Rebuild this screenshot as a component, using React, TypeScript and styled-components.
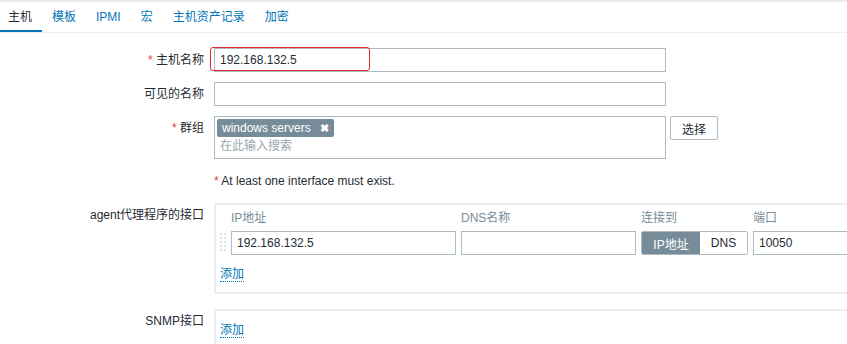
import styled, {createGlobalStyle, css} from 'styled-components';

const GlobalStyle = createGlobalStyle`
  html {
    overflow: hidden;
  }
  body {
    margin: 0;
    background: #fff;
    color: #1f2c33;
    font-family: "Liberation Sans", Arial, "Noto Sans CJK SC", sans-serif;
    font-size: 12px;
  }
`;

const tabs = ['主机', '模板', 'IPMI', '宏', '主机资产记录', '加密'];

export default function App() {
    return (
        <>
            <GlobalStyle/>
            <Page>
                <TabBar>
                    {tabs.map((tab, i) => (
                        <Tab key={tab} $active={i === 0}>{tab}</Tab>
                    ))}
                </TabBar>

                <Form>
                    <Label><Required>*</Required> 主机名称</Label>
                    <Field>
                        <Marked>
                            <TextInput $width={452} defaultValue="192.168.132.5"/>
                            <Highlight/>
                        </Marked>
                    </Field>

                    <Label>可见的名称</Label>
                    <Field>
                        <TextInput $width={452}/>
                    </Field>

                    <Label><Required>*</Required> 群组</Label>
                    <Field>
                        <MultiSelect>
                            <Tag>windows servers<TagRemove>✖</TagRemove></Tag>
                            <Placeholder>在此输入搜索</Placeholder>
                        </MultiSelect>
                        <Button>选择</Button>
                    </Field>

                    <Label/>
                    <Field>
                        <Notice><Required>*</Required> At least one interface must exist.</Notice>
                    </Field>

                    <Label>agent代理程序的接口</Label>
                    <Field>
                        <InterfaceBox>
                            <InterfaceGrid>
                                <span/>
                                <HeaderCell>IP地址</HeaderCell>
                                <HeaderCell>DNS名称</HeaderCell>
                                <HeaderCell>连接到</HeaderCell>
                                <HeaderCell>端口</HeaderCell>

                                <DragHandle width="6" height="20" viewBox="0 0 6 20">
                                    {[0, 4, 8, 12, 16].map(y => (
                                        <g key={y}>
                                            <rect x="0" y={y} width="2" height="2"/>
                                            <rect x="4" y={y} width="2" height="2"/>
                                        </g>
                                    ))}
                                </DragHandle>
                                <TextInput $width={225} defaultValue="192.168.132.5"/>
                                <TextInput $width={175}/>
                                <Toggle>
                                    <ToggleOption $selected>IP地址</ToggleOption>
                                    <ToggleOption>DNS</ToggleOption>
                                </Toggle>
                                <TextInput $width={100} defaultValue="10050"/>
                            </InterfaceGrid>
                            <AddLink>添加</AddLink>
                        </InterfaceBox>
                    </Field>

                    <Label $spaced>SNMP接口</Label>
                    <Field $spaced>
                        <InterfaceBox>
                            <AddLink>添加</AddLink>
                        </InterfaceBox>
                    </Field>
                </Form>
            </Page>
        </>
    );
}

const Page = styled.div`
  border-top: 2px solid #e8ebed;
  overflow: hidden;
`;

const TabBar = styled.div`
  display: flex;
  gap: 2px;
  height: 30px;
  border-bottom: 1px solid #ebeef0;
`;

const Tab = styled.div<{ $active?: boolean }>`
  padding: 0 10px 0 8px;
  line-height: 30px;
  color: #0275b8;
  cursor: pointer;

  ${({$active}) => $active && css`
    color: #1f2c33;
    box-shadow: inset 0 -2px 0 #0275b8;
  `}
`;

const Form = styled.div`
  display: grid;
  grid-template-columns: 204px minmax(0, 1fr);
  column-gap: 10px;
  row-gap: 10px;
  padding-top: 15px;
`;

const Label = styled.div<{ $spaced?: boolean }>`
  text-align: right;
  line-height: 24px;
  white-space: nowrap;
  margin-top: ${({$spaced}) => ($spaced ? '5px' : '0')};
`;

const Field = styled.div<{ $spaced?: boolean }>`
  display: flex;
  align-items: flex-start;
  gap: 4px;
  min-width: 0;
  margin-top: ${({$spaced}) => ($spaced ? '5px' : '0')};
`;

const Required = styled.span`
  color: #e33734;
`;

const Marked = styled.div`
  position: relative;
`;

const Highlight = styled.div`
  position: absolute;
  left: -4px;
  top: -1px;
  width: 158px;
  height: 22px;
  border: 1.5px solid #e3282b;
  border-radius: 3px;
  pointer-events: none;
`;

const TextInput = styled.input<{ $width: number }>`
  box-sizing: border-box;
  width: ${({$width}) => $width}px;
  height: 24px;
  margin: 0;
  padding: 0 5px;
  border: 1px solid #acbbc2;
  border-radius: 0;
  background: #fff;
  color: #1f2c33;
  font: inherit;
  font-size: 12px;
  outline: none;
`;

const MultiSelect = styled.div`
  box-sizing: border-box;
  width: 452px;
  height: 43px;
  padding: 2px;
  border: 1px solid #acbbc2;
  background: #fff;
`;

const Tag = styled.span`
  display: inline-flex;
  align-items: center;
  height: 18px;
  padding: 0 5px 0 5px;
  border-radius: 2px;
  background: #768d99;
  color: #fff;
  font-size: 12px;
`;

const TagRemove = styled.span`
  margin-left: 9px;
  font-size: 11px;
  font-weight: bold;
`;

const Placeholder = styled.div`
  line-height: 18px;
  padding-left: 3px;
  color: #9aa7ae;
`;

const Button = styled.button`
  box-sizing: border-box;
  height: 24px;
  padding: 0 11px;
  border: 1px solid #acbbc2;
  border-radius: 2px;
  background: #fff;
  color: #1f2c33;
  font: inherit;
  font-size: 12px;
`;

const Notice = styled.div`
  line-height: 24px;
`;

const InterfaceBox = styled.div`
  box-sizing: border-box;
  flex: 0 0 auto;
  width: 700px;
  padding: 0 0 10px 4px;
  border: 2px solid #ebeef0;
`;

const InterfaceGrid = styled.div`
  display: grid;
  grid-template-columns: 6px 225px 175px 107px 100px;
  grid-template-rows: 22px 24px;
  column-gap: 5px;
  row-gap: 4px;
  align-items: center;
`;

const HeaderCell = styled.div`
  color: #768d99;
  white-space: nowrap;
`;

const DragHandle = styled.svg`
  fill: #dde2e5;
`;

const Toggle = styled.div`
  display: flex;
  height: 24px;
  box-sizing: border-box;
  border: 1px solid #acbbc2;
  border-radius: 2px;
  overflow: hidden;
`;

const ToggleOption = styled.div<{ $selected?: boolean }>`
  flex: ${({$selected}) => ($selected ? '0 0 58px' : '1')};
  display: flex;
  align-items: center;
  justify-content: center;
  background: ${({$selected}) => ($selected ? '#768d99' : '#fff')};
  color: ${({$selected}) => ($selected ? '#fff' : '#1f2c33')};
`;

const AddLink = styled.span`
  display: inline-block;
  margin: 12px 0 0 0;
  line-height: 14px;
  color: #0275b8;
  border-bottom: 1px dotted #0275b8;
  cursor: pointer;
`;
